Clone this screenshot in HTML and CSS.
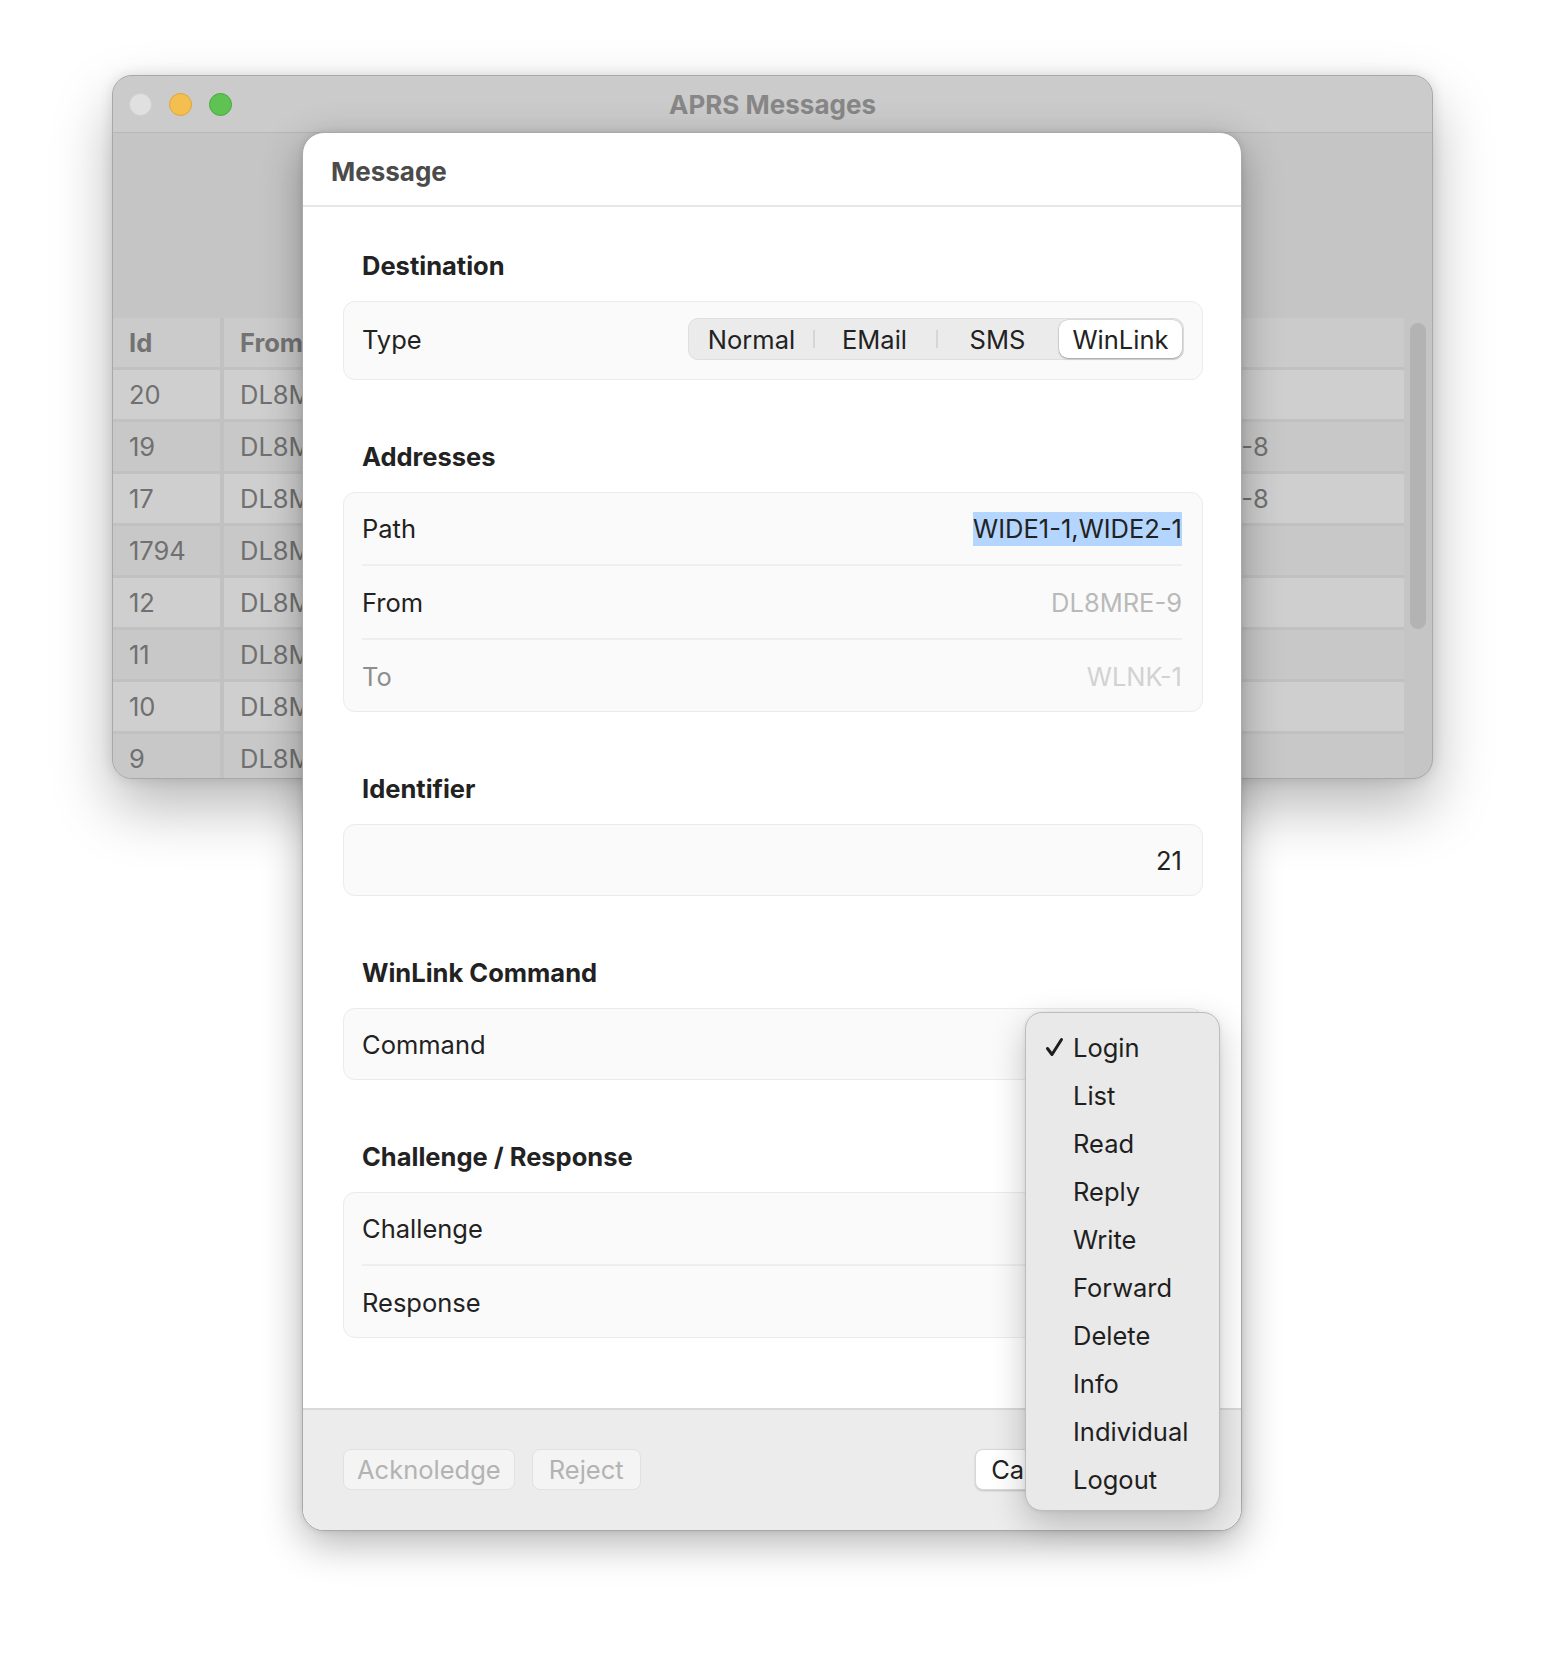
FILE: index.html
```html
<!DOCTYPE html>
<html>
<head>
<meta charset="utf-8">
<title>APRS Messages</title>
<link rel="stylesheet" href="styles.css">
</head>
<body>
<div class="stage">
  <div class="window">
    <div class="titlebar">
      <div class="lights">
        <span class="light close"></span>
        <span class="light min"></span>
        <span class="light max"></span>
      </div>
      <div class="wtitle">APRS Messages</div>
      <div></div>
    </div>
    <div class="wbody">
      <div class="table">
        <div class="trow head"><div class="cell">Id</div><div class="cell">From</div><div class="cell"></div><div class="cell"></div><div class="cell"></div></div>
        <div class="trow"><div class="cell">20</div><div class="cell">DL8MRE-9</div><div class="cell"></div><div class="cell"></div><div class="cell"></div></div>
        <div class="trow alt"><div class="cell">19</div><div class="cell">DL8MRE-9</div><div class="cell"></div><div class="cell"></div><div class="cell">DL8MRE-8</div></div>
        <div class="trow"><div class="cell">17</div><div class="cell">DL8MRE-9</div><div class="cell"></div><div class="cell"></div><div class="cell">DL8MRE-8</div></div>
        <div class="trow alt"><div class="cell">1794</div><div class="cell">DL8MRE-9</div><div class="cell"></div><div class="cell"></div><div class="cell"></div></div>
        <div class="trow"><div class="cell">12</div><div class="cell">DL8MRE-9</div><div class="cell"></div><div class="cell"></div><div class="cell"></div></div>
        <div class="trow alt"><div class="cell">11</div><div class="cell">DL8MRE-9</div><div class="cell"></div><div class="cell"></div><div class="cell"></div></div>
        <div class="trow"><div class="cell">10</div><div class="cell">DL8MRE-9</div><div class="cell"></div><div class="cell"></div><div class="cell"></div></div>
        <div class="trow alt"><div class="cell">9</div><div class="cell">DL8MRE-9</div><div class="cell"></div><div class="cell"></div><div class="cell"></div></div>
      </div>
      <div class="track"><div class="thumb"></div></div>
    </div>
  </div>

  <div class="sheet">
    <div class="sheet-head">Message</div>
    <div class="sheet-body">
      <section class="section">
        <h2 class="sec-title">Destination</h2>
        <div class="box">
          <div class="row row-tall">
            <span class="label">Type</span>
            <div class="segmented">
              <span class="seg">Normal</span>
              <span class="seg">EMail</span>
              <span class="seg">SMS</span>
              <span class="seg seg-on">WinLink</span>
            </div>
          </div>
        </div>
      </section>

      <section class="section">
        <h2 class="sec-title">Addresses</h2>
        <div class="box">
          <div class="row">
            <span class="label">Path</span>
            <span class="value"><span class="selected">WIDE1-1,WIDE2-1</span></span>
          </div>
          <div class="sep"></div>
          <div class="row">
            <span class="label">From</span>
            <span class="value muted">DL8MRE-9</span>
          </div>
          <div class="sep"></div>
          <div class="row">
            <span class="label dim">To</span>
            <span class="value faint">WLNK-1</span>
          </div>
        </div>
      </section>

      <section class="section">
        <h2 class="sec-title">Identifier</h2>
        <div class="box">
          <div class="row">
            <span class="label"></span>
            <span class="value">21</span>
          </div>
        </div>
      </section>

      <section class="section">
        <h2 class="sec-title">WinLink Command</h2>
        <div class="box">
          <div class="row">
            <span class="label">Command</span>
            <span class="value"></span>
          </div>
        </div>
      </section>

      <section class="section">
        <h2 class="sec-title">Challenge / Response</h2>
        <div class="box">
          <div class="row">
            <span class="label">Challenge</span>
            <span class="value"></span>
          </div>
          <div class="sep"></div>
          <div class="row">
            <span class="label">Response</span>
            <span class="value"></span>
          </div>
        </div>
      </section>
    </div>
    <div class="sheet-foot">
      <div class="btn-group">
        <button class="btn btn-disabled">Acknoledge</button>
        <button class="btn btn-disabled btn-reject">Reject</button>
      </div>
      <div class="btn-group btn-group-right">
        <button class="btn btn-normal">Cancel</button>
      </div>
    </div>
  </div>

  <div class="menu">
    <div class="mitem"><span class="check"><svg width="19" height="20" viewBox="0 0 19 20"><path d="M2.5 11.5 L7 17.5 L16.5 2.5" fill="none" stroke="#1e1e1e" stroke-width="3" stroke-linecap="round" stroke-linejoin="round"/></svg></span>Login</div>
    <div class="mitem"><span class="check"></span>List</div>
    <div class="mitem"><span class="check"></span>Read</div>
    <div class="mitem"><span class="check"></span>Reply</div>
    <div class="mitem"><span class="check"></span>Write</div>
    <div class="mitem"><span class="check"></span>Forward</div>
    <div class="mitem"><span class="check"></span>Delete</div>
    <div class="mitem"><span class="check"></span>Info</div>
    <div class="mitem"><span class="check"></span>Individual</div>
    <div class="mitem"><span class="check"></span>Logout</div>
  </div>
</div>
</body>
</html>
```

FILE: styles.css
```css
html, body {
  margin: 0;
  padding: 0;
  background: #ffffff;
}
body {
  font-family: Inter, "Noto Sans", "Liberation Sans", sans-serif;
  font-size: 25.5px;
  color: #1f1f1f;
}
.stage {
  position: relative;
  width: 1544px;
  height: 1678px;
  box-sizing: border-box;
  padding: 75px 0 0 112px;
  overflow: hidden;
}

/* background window */
.window {
  width: 1321px;
  height: 704px;
  box-sizing: border-box;
  border: 1px solid #a8a8a8;
  border-radius: 20px;
  background: #c5c5c5;
  overflow: hidden;
  box-shadow: 0 28px 60px rgba(0,0,0,0.28), 0 0 14px rgba(0,0,0,0.12);
}
.titlebar {
  height: 57px;
  box-sizing: border-box;
  border-bottom: 1px solid #b7b7b7;
  background: #cbcbcb;
  display: grid;
  grid-template-columns: 1fr auto 1fr;
  align-items: center;
}
.lights {
  display: flex;
  gap: 17px;
  padding-left: 16px;
}
.light {
  width: 23px;
  height: 23px;
  border-radius: 50%;
  box-sizing: border-box;
}
.close { background: #e0e0e0; border: 1px solid #cfcfcf; }
.min { background: #f4bf4f; border: 1px solid #dca43c; }
.max { background: #5fc354; border: 1px solid #4aa63f; }
.wtitle {
  font-weight: 700;
  font-size: 26px;
  color: #878787;
}
.wbody {
  display: flex;
  padding-top: 185px;
}
.table {
  width: 1291px;
  display: flex;
  flex-direction: column;
  gap: 3px;
  background: #c1c1c1;
}
.trow {
  display: grid;
  grid-template-columns: 107px 330px 300px 256px 1fr;
  gap: 4px;
  height: 49px;
}
.cell {
  background: #cfcfcf;
  padding-left: 16px;
  display: flex;
  align-items: center;
  color: #707070;
  font-size: 25.5px;
  white-space: nowrap;
  overflow: hidden;
}
.trow.alt .cell { background: #c8c8c8; }
.trow.head .cell { background: #cbcbcb; font-weight: 700; color: #737373; }
.track {
  flex: 1;
  padding: 5px 0 0 6px;
}
.thumb {
  width: 16px;
  height: 306px;
  border-radius: 8px;
  background: #b3b3b3;
}

/* sheet */
.sheet {
  position: absolute;
  left: 302px;
  top: 132px;
  width: 940px;
  height: 1399px;
  box-sizing: border-box;
  background: #ffffff;
  border: 1px solid #a9a9a9;
  border-radius: 22px;
  overflow: hidden;
  display: flex;
  flex-direction: column;
  box-shadow: 0 12px 40px rgba(0,0,0,0.30), 0 0 6px rgba(0,0,0,0.10);
}
.sheet-head {
  height: 74px;
  flex: none;
  box-sizing: border-box;
  border-bottom: 2px solid #e6e6e6;
  padding: 14px 0 0 28px;
  font-weight: 700;
  font-size: 26px;
  line-height: 50px;
  color: #4b4b4b;
}
.sheet-body {
  flex: 1;
  padding: 41px 38px 0 40px;
  display: flex;
  flex-direction: column;
  gap: 59px;
}
.sec-title {
  margin: 0 0 17px 0;
  padding-left: 19px;
  height: 36px;
  line-height: 36px;
  font-size: 25.5px;
  font-weight: 700;
  color: #222222;
}
.box {
  background: #fafafa;
  border: 1px solid #ebebeb;
  border-radius: 12px;
  padding: 0 20px 0 18px;
}
.row {
  height: 70px;
  display: flex;
  align-items: center;
  justify-content: space-between;
}
.row-tall { height: 77px; padding-bottom: 3px; box-sizing: border-box; }
.sep {
  height: 2px;
  margin: 1px 0;
  background: #eeeeee;
}
.label { color: #222222; }
.label.dim { color: #8e8e8e; }
.value { color: #222222; }
.value.muted { color: #b9b9b9; }
.value.faint { color: #d2d2d2; }
.selected {
  background: #b4d6fe;
  padding: 1px 0 2px 0;
}

.segmented {
  display: flex;
  height: 42px;
  box-sizing: border-box;
  background: #ebebeb;
  border: 1px solid #dedede;
  border-radius: 10px;
  padding: 1px;
  margin-right: -2px;
}
.seg {
  width: 123px;
  display: flex;
  align-items: center;
  justify-content: center;
  position: relative;
  color: #222222;
}
.seg + .seg::before {
  content: "";
  position: absolute;
  left: 0;
  top: 10px;
  bottom: 10px;
  width: 2px;
  background: #d6d6d6;
}
.seg-on {
  background: #ffffff;
  border-radius: 9px;
  box-shadow: 0 1px 2px rgba(0,0,0,0.28), 0 0 0 0.5px rgba(0,0,0,0.12);
}
.seg-on::before { display: none; }

.sheet-foot {
  flex: none;
  height: 122px;
  box-sizing: border-box;
  border-top: 2px solid #d9d9d9;
  background: #ececec;
  padding: 39px 38px 0 40px;
  display: flex;
  justify-content: space-between;
  align-items: flex-start;
}
.btn-group {
  display: flex;
  gap: 17px;
}
.btn-group-right {
  margin-right: 112px;
}
.btn {
  font-family: Inter, "Noto Sans", "Liberation Sans", sans-serif;
  font-size: 25.5px;
  height: 41px;
  padding: 0 13px;
  border-radius: 8px;
  line-height: 39px;
}
.btn-disabled {
  background: #f4f4f4;
  color: #b3b3b3;
  border: 1px solid #e1e1e1;
}
.btn-reject {
  min-width: 109px;
}
.btn-normal {
  background: #ffffff;
  color: #222222;
  border: 1px solid #d8d8d8;
  box-shadow: 0 1px 2px rgba(0,0,0,0.18);
  min-width: 116px;
}

/* popup menu */
.menu {
  position: absolute;
  left: 1025px;
  top: 1012px;
  width: 195px;
  height: 499px;
  box-sizing: border-box;
  padding-top: 10px;
  background: #e9e9e9;
  border: 1px solid #bdbdbd;
  border-radius: 17px;
  box-shadow: 0 12px 34px rgba(0,0,0,0.22), 0 0 4px rgba(0,0,0,0.08);
}
.mitem {
  height: 48px;
  display: flex;
  align-items: center;
  color: #1f1f1f;
}
.check {
  width: 47px;
  display: flex;
  justify-content: flex-end;
  padding-right: 9px;
  box-sizing: border-box;
}
.check svg { display: block; }
```
